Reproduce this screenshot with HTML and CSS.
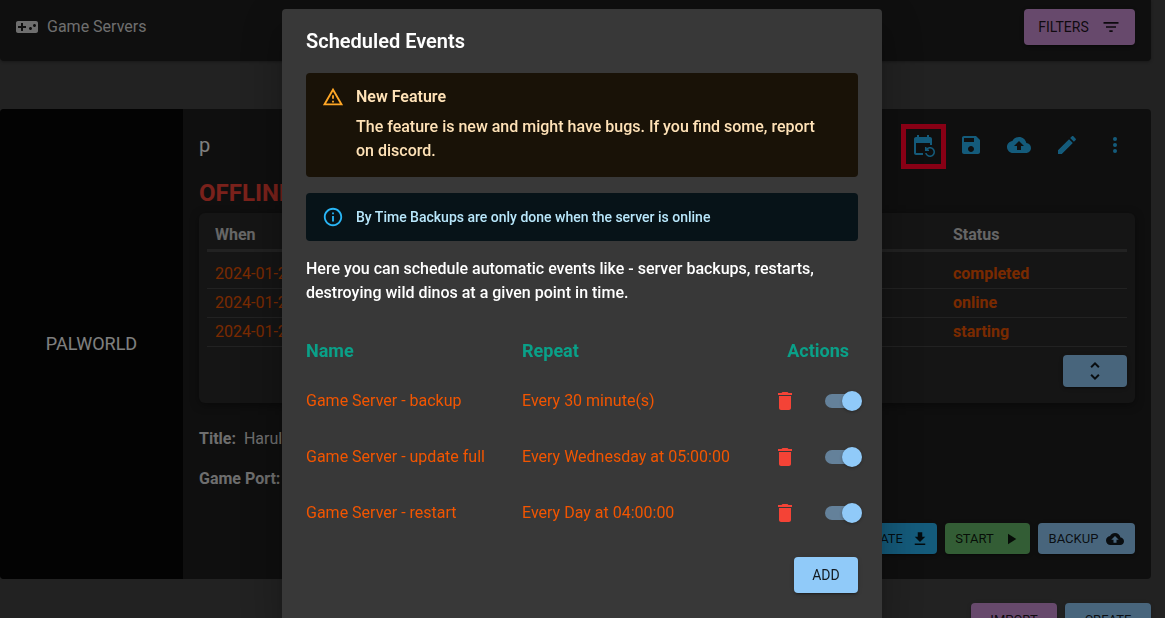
FILE: index.html
```html
<!DOCTYPE html>
<html lang="en">
<head>
    <meta charset="UTF-8">
    <meta name="viewport" content="width=device-width, initial-scale=1.0">
    <title>Game Servers</title>
    <link rel="stylesheet" href="styles.css">
</head>
<body>
    <!-- Icons -->
    <svg class="icon-defs" aria-hidden="true">
        <symbol id="i-gamepad" viewBox="0 0 24 24"><path d="M21 6H3c-1.1 0-2 .9-2 2v8c0 1.1.9 2 2 2h18c1.1 0 2-.9 2-2V8c0-1.1-.9-2-2-2zm-10 7H8v3H6v-3H3v-2h3V8h2v3h3v2zm4.5 2c-.83 0-1.5-.67-1.5-1.5s.67-1.5 1.5-1.5 1.5.67 1.5 1.5-.67 1.5-1.5 1.5zm4-3c-.83 0-1.5-.67-1.5-1.5S18.67 9 19.5 9s1.5.67 1.5 1.5-.67 1.5-1.5 1.5z"/></symbol>
        <symbol id="i-filter" viewBox="0 0 24 24"><path d="M10 18h4v-2h-4v2zM3 6v2h18V6H3zm3 7h12v-2H6v2z"/></symbol>
        <symbol id="i-event" viewBox="0 0 24 24"><path d="M21 12V6c0-1.1-.9-2-2-2h-1V2h-2v2H8V2H6v2H5c-1.1 0-2 .9-2 2v14c0 1.1.9 2 2 2h7v-2H5V10h14v2h2zm-5.36 8c.43 1.45 1.77 2.5 3.36 2.5 1.93 0 3.5-1.57 3.5-3.5s-1.57-3.5-3.5-3.5c-.95 0-1.82.38-2.45 1H18V18h-4v-4h1.5v1.43c.9-.88 2.14-1.43 3.5-1.43 2.76 0 5 2.24 5 5s-2.24 5-5 5c-2.42 0-4.44-1.72-4.9-4h1.54z"/></symbol>
        <symbol id="i-save" viewBox="0 0 24 24"><path d="M17 3H5c-1.11 0-2 .9-2 2v14c0 1.1.89 2 2 2h14c1.1 0 2-.9 2-2V7l-4-4zm-5 16c-1.66 0-3-1.34-3-3s1.34-3 3-3 3 1.34 3 3-1.34 3-3 3zm3-10H5V5h10v4z"/></symbol>
        <symbol id="i-cloud" viewBox="0 0 24 24"><path d="M19.35 10.04C18.67 6.59 15.64 4 12 4 9.11 4 6.6 5.64 5.35 8.04 2.34 8.36 0 10.91 0 14c0 3.31 2.69 6 6 6h13c2.76 0 5-2.24 5-5 0-2.64-2.05-4.78-4.65-4.96zM14 13v4h-4v-4H7l5-5 5 5h-3z"/></symbol>
        <symbol id="i-edit" viewBox="0 0 24 24"><path d="M3 17.25V21h3.75L17.81 9.94l-3.75-3.75L3 17.25zM20.71 7.04c.39-.39.39-1.02 0-1.41l-2.34-2.34c-.39-.39-1.02-.39-1.41 0l-1.83 1.83 3.75 3.75 1.83-1.83z"/></symbol>
        <symbol id="i-more" viewBox="0 0 24 24"><circle cx="12" cy="6" r="2"/><circle cx="12" cy="12" r="2"/><circle cx="12" cy="18" r="2"/></symbol>
        <symbol id="i-delete" viewBox="0 0 24 24"><path d="M6 19c0 1.1.9 2 2 2h8c1.1 0 2-.9 2-2V7H6v12zM19 4h-3.5l-1-1h-5l-1 1H5v2h14V4z"/></symbol>
        <symbol id="i-unfold" viewBox="0 0 24 24"><path d="M12 5.83L15.17 9l1.41-1.41L12 3 7.41 7.59 8.83 9 12 5.83zm0 12.34L8.83 15l-1.41 1.41L12 21l4.59-4.59L15.17 15 12 18.17z"/></symbol>
        <symbol id="i-warning" viewBox="0 0 24 24"><path d="M12 5.99L19.53 19H4.47L12 5.99M12 2L1 21h22L12 2zm1 14h-2v2h2v-2zm0-6h-2v4h2v-4z"/></symbol>
        <symbol id="i-info" viewBox="0 0 24 24"><path d="M11 7h2v2h-2zm0 4h2v6h-2zm1-9C6.48 2 2 6.48 2 12s4.48 10 10 10 10-4.48 10-10S17.52 2 12 2zm0 18c-4.41 0-8-3.59-8-8s3.59-8 8-8 8 3.59 8 8-3.59 8-8 8z"/></symbol>
        <symbol id="i-download" viewBox="0 0 24 24"><path d="M19 9h-4V3H9v6H5l7 7 7-7zM5 18v2h14v-2H5z"/></symbol>
        <symbol id="i-play" viewBox="0 0 24 24"><path d="M8 5v14l11-7z"/></symbol>
    </svg>

    <div class="page">
        <header class="topbar">
            <div class="topbar-title">
                <svg class="icon"><use href="#i-gamepad"/></svg>
                <span>Game Servers</span>
            </div>
            <button class="btn btn-secondary btn-filters">FILTERS <svg class="icon icon-md"><use href="#i-filter"/></svg></button>
        </header>

        <main class="server-card">
            <div class="server-game">PALWORLD</div>
            <div class="server-body">
                <div class="server-head">
                    <h2>p</h2>
                    <div class="server-tools">
                        <button class="icon-btn highlighted" aria-label="Scheduled events"><svg class="icon"><use href="#i-event"/></svg></button>
                        <button class="icon-btn" aria-label="Save"><svg class="icon"><use href="#i-save"/></svg></button>
                        <button class="icon-btn" aria-label="Upload"><svg class="icon"><use href="#i-cloud"/></svg></button>
                        <button class="icon-btn" aria-label="Edit"><svg class="icon"><use href="#i-edit"/></svg></button>
                        <button class="icon-btn" aria-label="More"><svg class="icon"><use href="#i-more"/></svg></button>
                    </div>
                </div>
                <div class="server-status">OFFLINE</div>

                <div class="history">
                    <table class="history-table">
                        <thead>
                            <tr><th>When</th><th class="col-status">Status</th></tr>
                        </thead>
                        <tbody>
                            <tr><td>2024-01-2</td><td>completed</td></tr>
                            <tr><td>2024-01-2</td><td>online</td></tr>
                            <tr><td>2024-01-2</td><td>starting</td></tr>
                        </tbody>
                    </table>
                    <button class="btn btn-primary btn-expand" aria-label="Expand"><svg class="icon"><use href="#i-unfold"/></svg></button>
                </div>

                <p class="detail"><strong>Title:</strong> <span>Harul</span></p>
                <p class="detail"><strong>Game Port:</strong></p>

                <div class="server-actions">
                    <button class="btn btn-small btn-info">UPDATE <svg class="icon icon-sm"><use href="#i-download"/></svg></button>
                    <button class="btn btn-small btn-success">START <svg class="icon icon-sm"><use href="#i-play"/></svg></button>
                    <button class="btn btn-small btn-primary btn-backup">BACKUP <svg class="icon icon-sm"><use href="#i-cloud"/></svg></button>
                </div>
            </div>
        </main>

        <div class="page-actions">
            <button class="btn btn-small btn-secondary">IMPORT</button>
            <button class="btn btn-small btn-primary">CREATE</button>
        </div>
    </div>

    <!-- Scheduled events dialog -->
    <div class="backdrop">
        <div class="dialog" role="dialog" aria-modal="true" aria-labelledby="dialog-title">
            <h1 id="dialog-title">Scheduled Events</h1>

            <div class="alert alert-warning">
                <svg class="icon"><use href="#i-warning"/></svg>
                <div>
                    <h3>New Feature</h3>
                    <p>The feature is new and might have bugs. If you find some, report on discord.</p>
                </div>
            </div>
            <div class="alert alert-info">
                <svg class="icon"><use href="#i-info"/></svg>
                <p>By Time Backups are only done when the server is online</p>
            </div>

            <p class="intro">Here you can schedule automatic events like - server backups, restarts, destroying wild dinos at a given point in time.</p>

            <table class="events">
                <thead>
                    <tr>
                        <th class="col-name">Name</th>
                        <th>Repeat</th>
                        <th class="col-actions">Actions</th>
                    </tr>
                </thead>
                <tbody>
                    <tr>
                        <td>Game Server - backup</td>
                        <td>Every 30 minute(s)</td>
                        <td>
                            <div class="event-actions">
                                <button class="icon-btn delete" aria-label="Delete backup"><svg class="icon"><use href="#i-delete"/></svg></button>
                                <input type="checkbox" class="switch" aria-label="Enable backup" checked>
                            </div>
                        </td>
                    </tr>
                    <tr>
                        <td>Game Server - update full</td>
                        <td>Every Wednesday at 05:00:00</td>
                        <td>
                            <div class="event-actions">
                                <button class="icon-btn delete" aria-label="Delete update full"><svg class="icon"><use href="#i-delete"/></svg></button>
                                <input type="checkbox" class="switch" aria-label="Enable update full" checked>
                            </div>
                        </td>
                    </tr>
                    <tr>
                        <td>Game Server - restart</td>
                        <td>Every Day at 04:00:00</td>
                        <td>
                            <div class="event-actions">
                                <button class="icon-btn delete" aria-label="Delete restart"><svg class="icon"><use href="#i-delete"/></svg></button>
                                <input type="checkbox" class="switch" aria-label="Enable restart" checked>
                            </div>
                        </td>
                    </tr>
                </tbody>
            </table>

            <div class="dialog-actions">
                <button class="btn btn-primary">ADD</button>
            </div>
        </div>
    </div>
</body>
</html>
```
FILE: styles.css
```css
* {
    box-sizing: border-box;
}
body {
    margin: 0;
    overflow: hidden;
    background: #444;
    color: #fff;
    font-family: Roboto, "Liberation Sans", sans-serif;
    font-size: 16px;
    line-height: 24px;
}
h1, h2, h3, p {
    margin: 0;
}
.icon-defs {
    position: absolute;
    width: 0;
    height: 0;
}
.icon {
    width: 24px;
    height: 24px;
    flex-shrink: 0;
    fill: currentColor;
}
.icon-md {
    width: 20px;
    height: 20px;
}
.icon-sm {
    width: 18px;
    height: 18px;
}

/* Buttons */
.btn {
    display: inline-flex;
    align-items: center;
    justify-content: center;
    gap: 8px;
    min-width: 64px;
    height: 36px;
    padding: 0 16px;
    border: none;
    border-radius: 4px;
    color: rgba(0, 0, 0, 0.87);
    font-family: inherit;
    font-size: 14px;
    font-weight: 400;
    box-shadow: 0 3px 1px -2px rgba(0, 0, 0, 0.2), 0 2px 2px rgba(0, 0, 0, 0.14), 0 1px 5px rgba(0, 0, 0, 0.12);
    cursor: pointer;
}
.btn-small {
    min-width: 85px;
    height: 31px;
    padding: 0 8px;
    font-size: 13px;
}
.btn-filters {
    min-width: 111px;
    padding: 0 12px;
    gap: 12px;
}
.btn-backup {
    min-width: 97px;
}
.btn-primary {
    background: #90caf9;
}
.btn-secondary {
    background: #ce93d8;
}
.btn-info {
    background: #29b6f6;
}
.btn-success {
    background: #66bb6a;
}
.icon-btn {
    position: relative;
    display: flex;
    padding: 8px;
    border: none;
    background: none;
    color: #29b6f6;
    cursor: pointer;
}
.highlighted::after {
    content: "";
    position: absolute;
    inset: -1px -3px -4px -2px;
    z-index: 2;
    border: 5px solid #880015;
}

/* Page behind the dialog */
.page {
    padding-right: 14px;
}
.topbar {
    display: flex;
    justify-content: space-between;
    align-items: flex-start;
    height: 61px;
    padding: 9px 16px;
    background: #1e1e1e;
    border-radius: 0 0 4px 4px;
    box-shadow: 0 1px 3px rgba(0, 0, 0, 0.3);
}
.topbar-title {
    display: flex;
    align-items: center;
    gap: 8px;
    height: 36px;
    margin-left: -1px;
    color: #ddd;
}
.server-card {
    display: flex;
    min-height: 470px;
    margin-top: 48px;
    background: #1e1e1e;
    border-radius: 4px;
    overflow: hidden;
}
.server-game {
    display: flex;
    align-items: center;
    justify-content: center;
    width: 183px;
    flex-shrink: 0;
    background: #060606;
    font-size: 18px;
}
.server-body {
    flex: 1;
    display: flex;
    flex-direction: column;
    padding: 16px 16px 25px;
}
.server-head {
    display: flex;
    justify-content: space-between;
    align-items: center;
}
.server-head h2 {
    font-size: 20px;
    font-weight: 400;
}
.server-tools {
    display: flex;
    gap: 8px;
}
.server-status {
    margin: 14px 0 6px;
    color: #f44336;
    font-size: 24px;
    font-weight: 700;
    line-height: 28px;
}
.history {
    display: flex;
    flex-direction: column;
    align-items: flex-end;
    padding: 8px 8px 16px;
    background: #2a2a2a;
    border-radius: 6px;
    box-shadow: 0 2px 10px rgba(0, 0, 0, 0.4);
}
.history-table {
    width: 100%;
    margin-bottom: 8px;
    border-collapse: separate;
    border-spacing: 0;
}
.history-table th, .history-table td {
    padding: 2px 8px;
    text-align: left;
    border-bottom: 1px solid #444;
}
.history-table th {
    color: #ccc;
    font-weight: 700;
    border-bottom-width: 3px;
}
.history-table td {
    color: #f25500;
}
.history-table td:last-child {
    font-weight: 700;
}
.history-table tbody tr:first-child td {
    padding-top: 10px;
}
.col-status {
    width: 182px;
}
.btn-expand {
    height: 32px;
}
.detail {
    margin-top: 16px;
    color: #ddd;
}
.history + .detail {
    margin-top: 24px;
}
.detail span {
    margin-left: 4px;
}
.server-actions {
    display: flex;
    justify-content: flex-end;
    gap: 8px;
    margin-top: auto;
}
.page-actions {
    display: flex;
    justify-content: flex-end;
    gap: 8px;
    margin-top: 24px;
}
.page-actions .btn {
    min-width: 86px;
    height: 32px;
}

/* Dialog */
.backdrop {
    position: fixed;
    inset: 0;
    z-index: 1;
    display: flex;
    justify-content: center;
    align-items: flex-start;
    padding: 9px 1px 0 0;
    overflow: hidden;
    background: rgba(0, 0, 0, 0.5);
}
.dialog {
    width: 100%;
    max-width: 600px;
    padding: 16px 24px 40px;
    background: #383838;
    border-radius: 4px;
    box-shadow: 0 11px 15px -7px rgba(0, 0, 0, 0.2), 0 24px 38px 3px rgba(0, 0, 0, 0.14), 0 9px 46px 8px rgba(0, 0, 0, 0.12);
}
.dialog h1 {
    margin-bottom: 16px;
    font-size: 20px;
    font-weight: 600;
    line-height: 32px;
}
.alert {
    display: flex;
    gap: 12px;
    margin-bottom: 16px;
    padding: 12px 24px 12px 16px;
    border-radius: 4px;
    font-weight: 500;
}
.alert .icon {
    width: 22px;
    height: 22px;
    margin-top: 1px;
}
.alert h3 {
    margin-bottom: 6px;
    font-size: 16px;
    font-weight: 600;
}
.alert-warning {
    padding-bottom: 14px;
    background: #191207;
    color: #ffe2b7;
}
.alert-warning .icon {
    color: #ffa726;
}
.alert-info {
    background: #071318;
    color: #b8e7fb;
    font-size: 14px;
}
.alert-info .icon {
    color: #29b6f6;
}
.intro {
    font-weight: 500;
}
.events {
    width: 100%;
    margin: 24px 0 16px;
    border-collapse: collapse;
}
.events th {
    height: 44px;
    padding: 0;
    color: #0aa088;
    font-size: 18px;
    font-weight: 700;
    text-align: left;
}
.events .col-name {
    width: 216px;
}
.events .col-actions {
    padding-right: 9px;
    text-align: right;
}
.events td {
    height: 56px;
    padding: 0;
    color: #f25500;
}
.event-actions {
    display: flex;
    justify-content: flex-end;
    align-items: center;
    gap: 20px;
    margin-right: -1px;
}
.delete {
    color: #f44336;
}
.switch {
    position: relative;
    appearance: none;
    width: 34px;
    height: 14px;
    margin: 0;
    border-radius: 7px;
    background: #64819a;
    cursor: pointer;
}
.switch::before {
    content: "";
    position: absolute;
    top: -3px;
    left: -3px;
    width: 20px;
    height: 20px;
    border-radius: 50%;
    background: #90caf9;
    box-shadow: 0 1px 3px rgba(0, 0, 0, 0.3);
}
.switch:checked::before {
    left: 17px;
}
.dialog-actions {
    display: flex;
    justify-content: flex-end;
}
```
